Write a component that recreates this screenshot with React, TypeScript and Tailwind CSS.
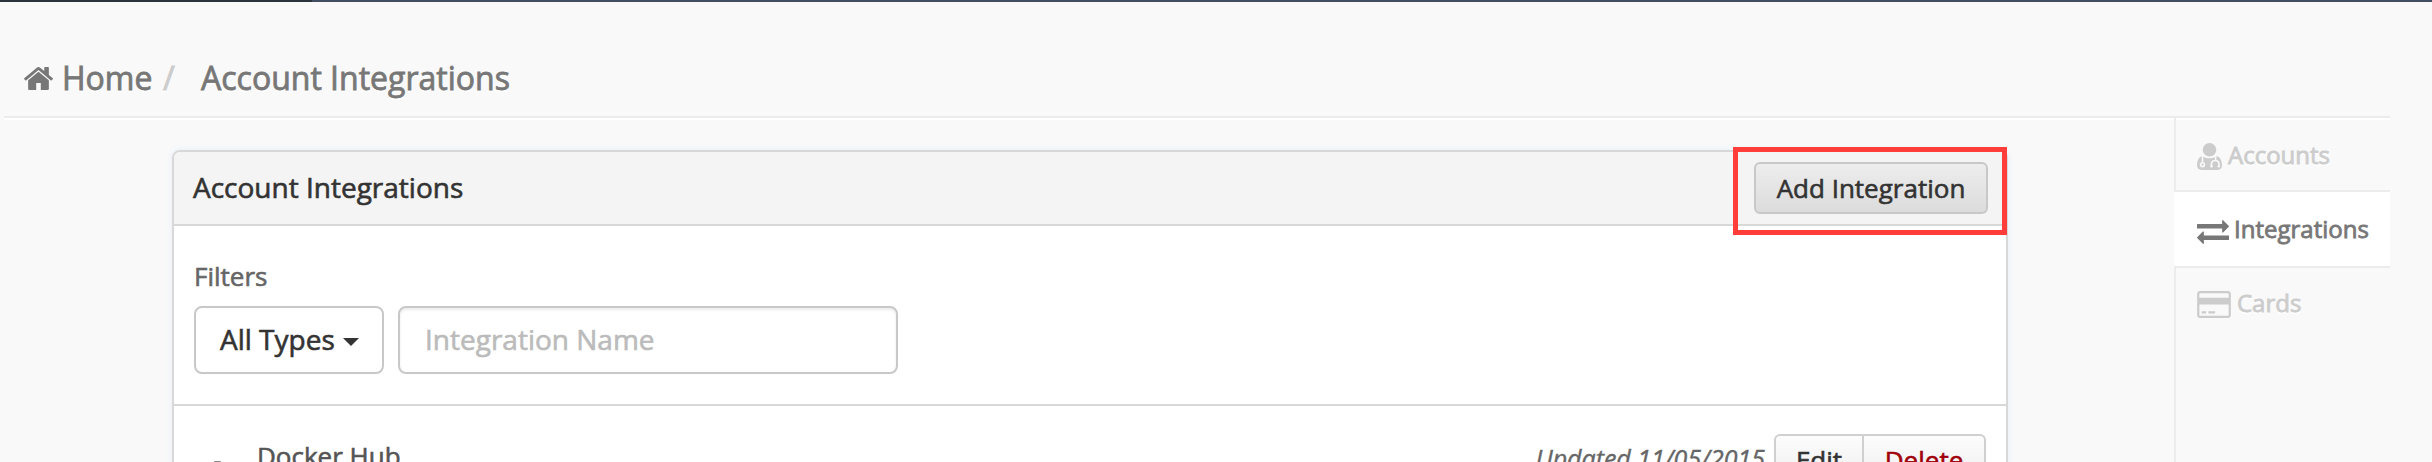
import React from "react";

function HomeIcon() {
  return (
    <svg viewBox="89 253 1614 1283" preserveAspectRatio="none" className="h-[23px] w-[29px] fill-current">
      <path d="M1472 992v480q0 26-19 45t-45 19h-384v-384h-256v384h-384q-26 0-45-19t-19-45v-480q0-1 .5-3t.5-3l575-474 575 474q1 2 1 6zm223-69l-62 74q-8 9-21 11h-3q-13 0-21-7l-692-577-692 577q-12 8-24 7-13-2-21-11l-62-74q-8-10-7-23.5t11-21.5l719-599q32-26 76-26t76 26l244 204v-195q0-14 9-23t23-9h192q14 0 23 9t9 23v408l219 182q10 8 11 21.5t-7 23.5z" />
    </svg>
  );
}

function DoctorIcon() {
  return (
    <svg viewBox="0 0 25 27" className="h-[27px] w-[25px]">
      <circle cx="12.5" cy="6.8" r="6.8" fill="currentColor" />
      <path
        d="M5.5 12.9C1.6 14 0 17.500 0 22.600C0 25.400 1.800 27 4.300 27H20.700C23.200 27 25 25.400 25 22.600C25 17.500 23.400 14 19.500 12.900C17.800 14.500 15.200 15.300 12.500 15.300C9.800 15.300 7.200 14.500 5.500 12.900Z"
        fill="currentColor"
      />
      <g fill="none" stroke="#f9f9f9" strokeWidth="1.6">
        <path d="M5.500 13V19.500" />
        <circle cx="5.500" cy="21.700" r="1.900" />
        <path d="M18.600 13V17.300M14.400 23.500V21.200C14.400 18.700 16 17.500 18.200 17.500C20.400 17.500 22 18.700 22 21.200V23.500" />
      </g>
      <circle cx="14.600" cy="23.300" r="1.200" fill="#f9f9f9" />
      <circle cx="21.800" cy="23.300" r="1.200" fill="#f9f9f9" />
    </svg>
  );
}

function ExchangeIcon() {
  return (
    <svg viewBox="0 288 1792 1344" className="h-[24px] w-[32px] fill-current">
      <path d="M1792 1184v192q0 13-9.5 22.5t-22.5 9.5h-1376v192q0 13-9.5 22.5t-22.500 9.500q-12 0-24-10l-319-320q-9-9-9-22 0-14 9-23l320-320q9-9 23-9 13 0 22.500 9.500t9.500 22.500v192h1376q13 0 22.500 9.500t9.500 22.500zm0-544q0 14-9 23l-320 320q-9 9-23 9-13 0-22.500-9.500t-9.500-22.500v-192h-1376q-13 0-22.500-9.500t-9.500-22.500v-192q0-13 9.500-22.500t22.500-9.500h1376v-192q0-14 9-23t23-9q12 0 24 10l319 319q9 9 9 23z" />
    </svg>
  );
}

function CardIcon() {
  return (
    <svg viewBox="0 128 1920 1536" className="h-[27px] w-[34px] fill-current">
      <path d="M1760 128q66 0 113 47t47 113v1216q0 66-47 113t-113 47h-1600q-66 0-113-47t-47-113v-1216q0-66 47-113t113-47h1600zm-1600 128q-13 0-22.500 9.500t-9.500 22.500v224h1664v-224q0-13-9.500-22.500t-22.500-9.500h-1600zm1600 1280q13 0 22.500-9.500t9.500-22.500v-608h-1664v608q0 13 9.500 22.500t22.500 9.500h1600zm-1504-128v-128h256v128h-256zm384 0v-128h384v128h-384z" />
    </svg>
  );
}

function Breadcrumb() {
  return (
    <nav className="ml-1 flex h-[118px] w-[2386px] border-b-2 border-[#ececec] pt-[54px] pl-5 text-[32px] leading-[48px] text-[#777] shadow-[0_2px_0_#fff] [-webkit-text-stroke:0.8px] [text-shadow:0_2px_0_#fff]">
      <a className="flex w-[139px]">
        <span className="mt-[13px] mr-[9px]">
          <HomeIcon />
        </span>
        Home
      </a>
      <span className="w-[38px] text-[#ccc]">/</span>
      <span>Account Integrations</span>
    </nav>
  );
}

function Sidebar() {
  return (
    <aside className="flex w-[216px] flex-col text-[24px] leading-9 [-webkit-text-stroke:0.8px] [text-shadow:0_2px_0_#fff]">
      <a className="flex h-[72px] border-l-2 border-[#ececec] pt-[19px] pl-[21px] text-[#ccc]">
        <span className="mt-[6px] mr-[6px]">
          <DoctorIcon />
        </span>
        Accounts
      </a>
      <a className="flex h-[78px] border-y-2 border-[#ececec] bg-white pt-[19px] pl-[23px] text-[#777]">
        <span className="mt-[9px] mr-[5px]">
          <ExchangeIcon />
        </span>
        Integrations
      </a>
      <a className="flex grow border-l-2 border-[#ececec] pt-[17px] pl-[21px] text-[#ccc]">
        <span className="mt-[6px] mr-[6px]">
          <CardIcon />
        </span>
        Cards
      </a>
    </aside>
  );
}

function IntegrationsPanel() {
  return (
    <section className="mt-8 ml-[172px] h-[400px] w-[1836px] rounded-t-[8px] border-2 border-[#d8d8d8] bg-white shadow-[0_0_6px_#e4eef8] [-webkit-text-stroke:0.6px]">
      <header className="relative flex h-[74px] justify-between rounded-t-[6px] border-b-2 border-[#d8d8d8] bg-[#f4f4f4] pt-[10px] pr-[18px] pl-[19px] text-[28px] text-[#333]">
        <h1 className="leading-[50px]">Account Integrations</h1>
        <button className="h-[52px] w-[234px] rounded-[6px] border-2 border-[#c8c8c8] bg-linear-to-b from-[#ededed] to-[#dcdcdc] text-[26px] leading-[48px]">
          Add Integration
        </button>
        <div className="absolute top-[-5px] right-[-1px] h-[88px] w-[274px] border-5 border-[#ff3d3a]" />
      </header>
      <div className="h-[180px] border-b-2 border-[#d8d8d8] px-5 pt-[32px]">
        <h2 className="h-[48px] text-[26px] leading-[36px] text-[#666]">Filters</h2>
        <div className="flex gap-[14px] text-[28px]">
          <button className="flex h-[68px] w-[190px] rounded-[8px] border-2 border-[#c8c8c8] pl-[24px] leading-[62px] text-[#333]">
            All Types
            <svg viewBox="0 0 16 8" className="mt-[30px] ml-2 h-2 w-4 fill-current">
              <path d="M0 0h16l-8 8z" />
            </svg>
          </button>
          <input
            placeholder="Integration Name"
            className="h-[68px] w-[500px] rounded-[8px] border-2 border-[#c8c8c8] pb-[2px] pl-[25px] shadow-[inset_0_2px_3px_rgba(0,0,0,0.08)] placeholder:text-[#bbb]"
          />
        </div>
      </div>
      <div className="flex h-[140px] pt-[28px] pr-5 pl-10">
        <div className="mt-[27px] mr-[36px] h-4 w-[7px] rounded-t-[1px] bg-[#888]" />
        <h3 className="mt-[4px] text-[26px] leading-[36px] text-[#555]">Docker Hub</h3>
        <em className="mt-[6px] mr-[9px] ml-auto text-[25px] leading-[36px] text-[#666] [-webkit-text-stroke:0.4px]">
          Updated 11/05/2015
        </em>
        <div className="flex h-[52px] w-[212px] rounded-[6px] border-2 border-[#d0d0d0] bg-linear-to-b from-[#fcfcfc] to-[#eee] text-[26px] leading-[48px]">
          <button className="w-[88px] border-r-2 border-[#d0d0d0] text-[#333]">Edit</button>
          <button className="grow text-[#a00009]">Delete</button>
        </div>
      </div>
    </section>
  );
}

export default function App() {
  return (
    <div className="h-[462px] w-[2432px] overflow-hidden bg-[#f9f9f9] font-['Open_Sans',sans-serif]">
      <div className="flex h-[118px] flex-col">
        <div className="h-[2px] shrink-0 bg-[#435063]">
          <div className="h-full w-[312px] bg-[#2a323b]" />
        </div>
        <div className="-mt-[2px]">
          <Breadcrumb />
        </div>
      </div>
      <div className="flex h-[344px] w-[2390px] justify-between">
        <IntegrationsPanel />
        <Sidebar />
      </div>
    </div>
  );
}
